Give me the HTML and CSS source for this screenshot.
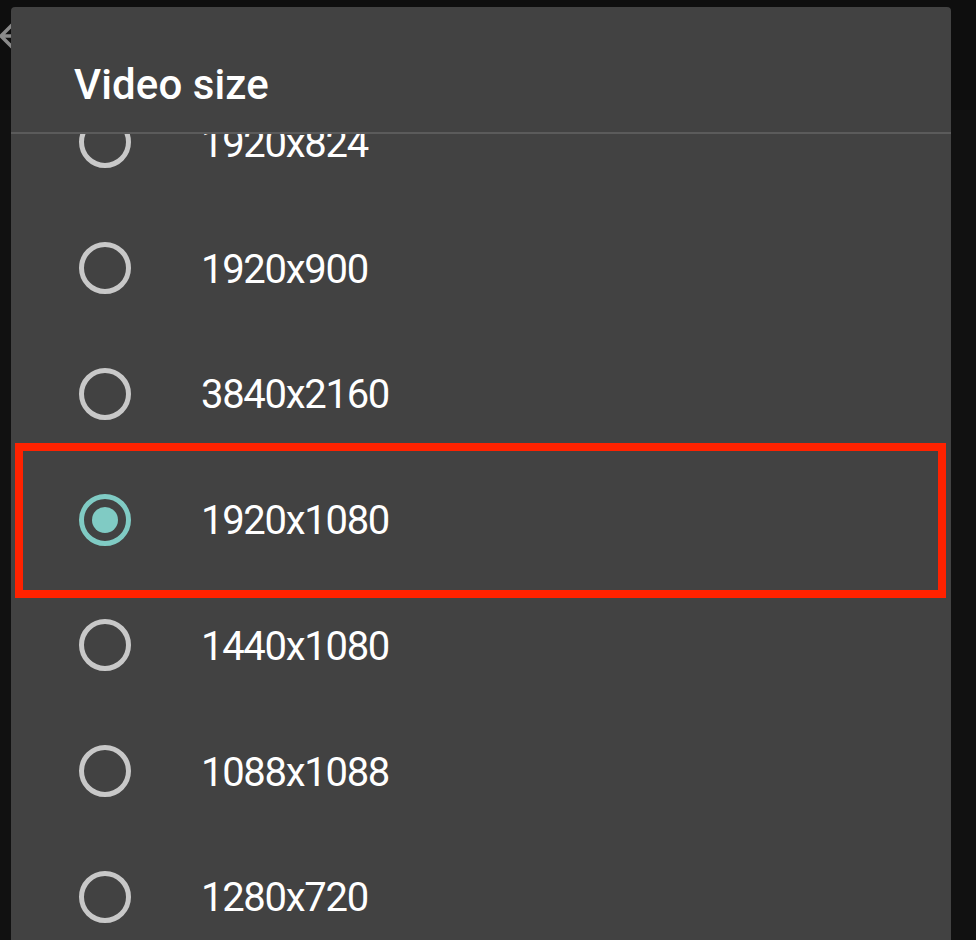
FILE: index.html
```html
<!DOCTYPE html>
<html lang="en">

<head>
    <meta charset="utf-8">
    <title>Video size</title>
    <link rel="stylesheet" href="styles.css">
</head>

<body>
    <header class="toolbar">
        <svg class="back" width="32" height="32" viewBox="0 0 32 32">
            <path d="M1 16 H32 M13 4 L1 16 L13 28" fill="none" stroke="#8a8a8a" stroke-width="3.5" />
        </svg>
    </header>

    <section class="dialog">
        <h2 class="dialog-title">Video size</h2>
        <div class="options">
            <ul class="option-list">
                <li class="option"><span class="radio"></span><span class="label">1920x824</span></li>
                <li class="option"><span class="radio"></span><span class="label">1920x900</span></li>
                <li class="option"><span class="radio"></span><span class="label">3840x2160</span></li>
                <li class="option selected"><span class="radio"></span><span class="label">1920x1080</span></li>
                <li class="option"><span class="radio"></span><span class="label">1440x1080</span></li>
                <li class="option"><span class="radio"></span><span class="label">1088x1088</span></li>
                <li class="option"><span class="radio"></span><span class="label">1280x720</span></li>
            </ul>
        </div>
    </section>

    <div class="highlight"></div>
</body>

</html>
```

FILE: styles.css
```css
:root {
    font-family: Roboto, "Noto Sans", sans-serif;
}

body {
    margin: 0;
    height: 940px;
    overflow: hidden;
    background-color: #111111;
}

.toolbar {
    height: 110px;
    padding-top: 20px;
    box-sizing: border-box;
    background-color: #0e0e0e;
}

.back {
    display: block;
}

.dialog {
    position: absolute;
    left: 11px;
    top: 7px;
    width: 940px;
    height: 960px;
    border-radius: 4px;
    overflow: hidden;
    background-color: #424242;
    display: flex;
    flex-direction: column;
}

.dialog-title {
    margin: 0;
    padding: 53px 0 22px 63px;
    font-size: 42px;
    line-height: 50px;
    font-weight: 500;
    letter-spacing: 0.1px;
    color: #ffffff;
    border-bottom: 2px solid #5b5b5b;
}

.options {
    flex: 1;
    overflow: hidden;
}

.option-list {
    list-style: none;
    margin: -54.7px 0 0 0;
    padding: 0;
}

.option {
    height: 125.8px;
    display: flex;
    align-items: center;
    padding-left: 68px;
}

.radio {
    width: 52px;
    height: 52px;
    box-sizing: border-box;
    border: 5px solid #c8c8c8;
    border-radius: 50%;
    display: flex;
    align-items: center;
    justify-content: center;
}

.selected .radio {
    border-color: #80cbc4;
}

.selected .radio::after {
    content: "";
    width: 26px;
    height: 26px;
    border-radius: 50%;
    background-color: #80cbc4;
}

.label {
    margin-left: 70px;
    padding-top: 3px;
    font-size: 40px;
    line-height: 50px;
    letter-spacing: -1.3px;
    color: #ffffff;
}

.highlight {
    position: absolute;
    left: 15px;
    top: 443px;
    width: 931px;
    height: 155px;
    box-sizing: border-box;
    border: 8px solid #ff2200;
}
```
